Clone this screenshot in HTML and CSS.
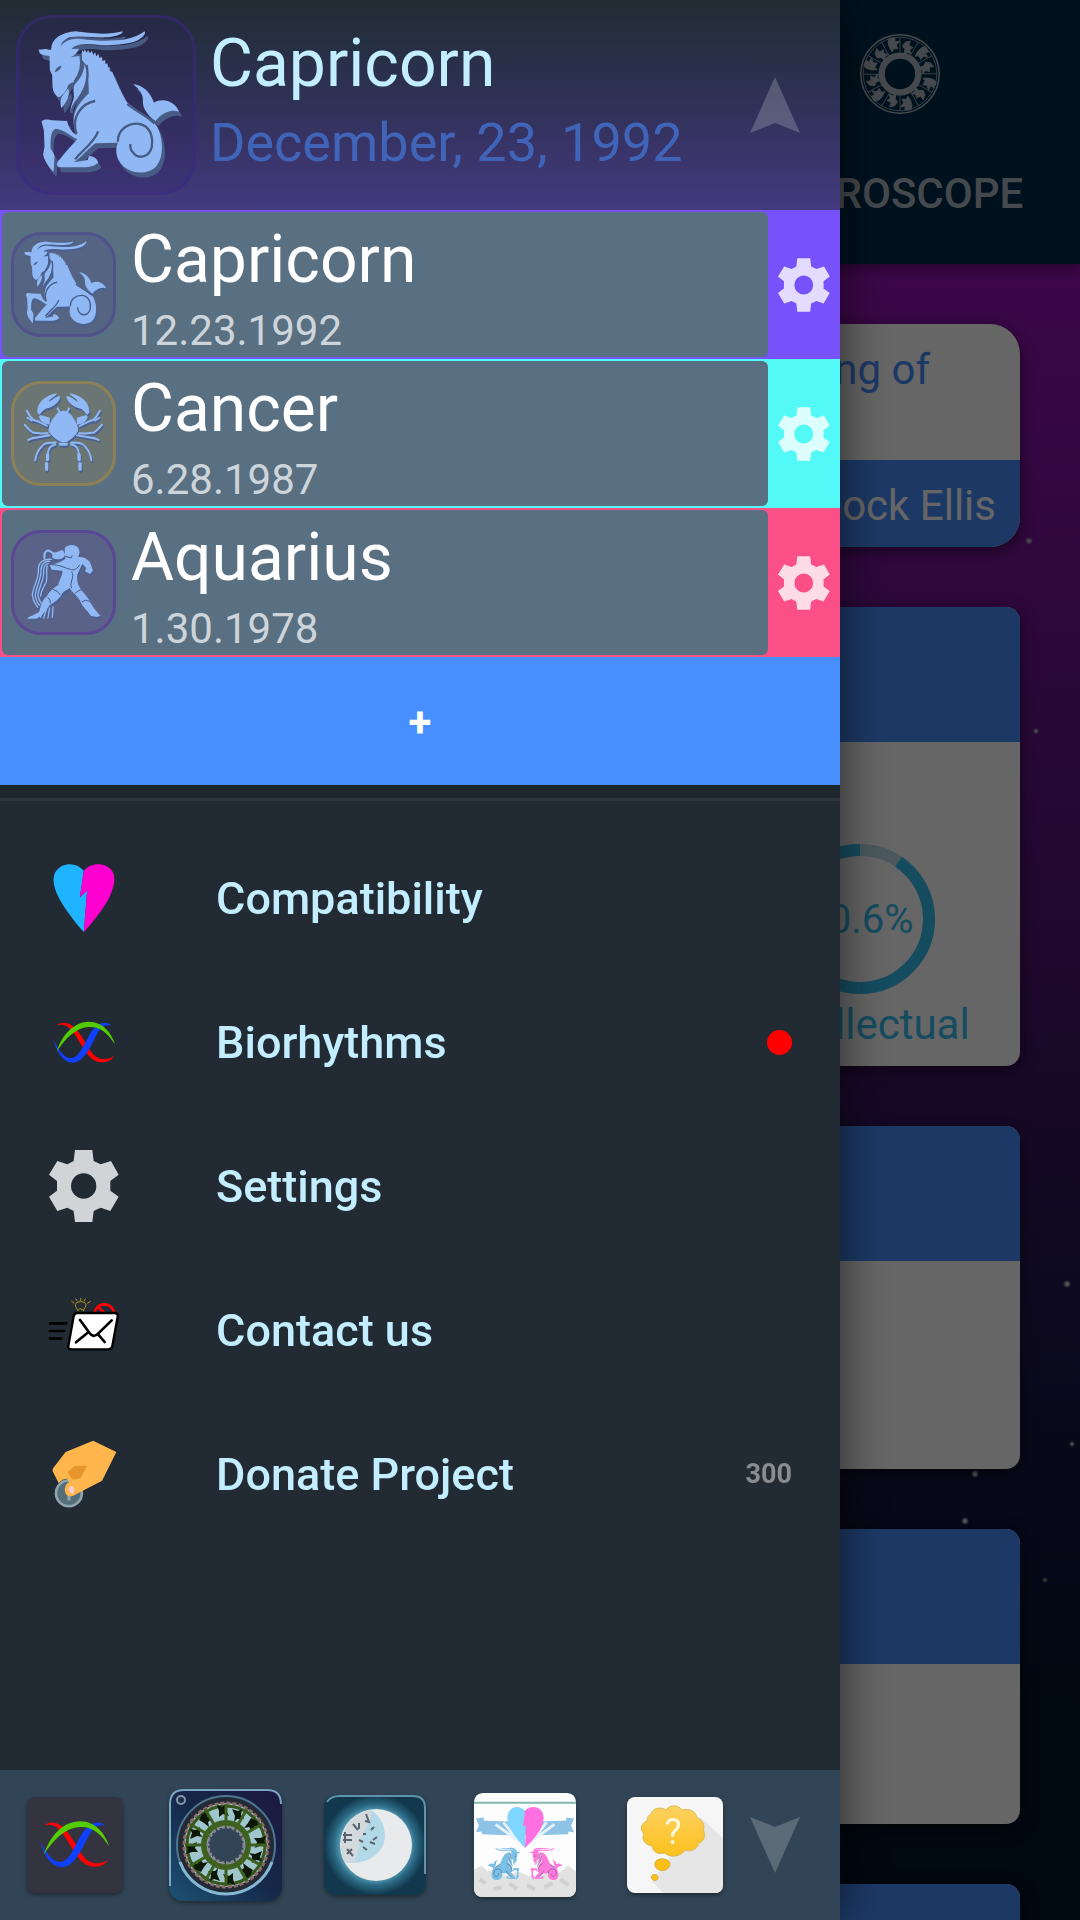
FILE: index.html
```html
<!DOCTYPE html>
<html lang="en">
<head>
    <meta charset="UTF-8">
    <meta name="viewport" content="width=device-width, initial-scale=1.0">
    <title>Horoscope</title>
    <link rel="stylesheet" href="styles.css">
</head>
<body>

    <!-- Shared icons -->
    <svg class="sprite" aria-hidden="true">
        <symbol id="gear" viewBox="0 0 210 216">
            <path fill-rule="evenodd" d="M78 0H130L134 33L155 43L186 33L209 74L184 93V122L209 140L184 183L155 173L134 183L130 216H78L74 183L55 173L25 183L0 140L24 122V93L0 74L25 33L55 43L74 33ZM104 70A38 38 0 1 0 104 146A38 38 0 1 0 104 70Z"/>
        </symbol>
        <symbol id="arrow" viewBox="0 0 50 56">
            <path d="M25 0L50 56L25 46L0 56Z"/>
        </symbol>
        <symbol id="goat" viewBox="49 45 535 540">
            <path d="M152 146C153 120 178 97 225 94C265 100 325 106 366 94C369 101 350 110 320 112C280 114 240 106 208 112C192 118 183 128 180 139C192 122 215 113 242 117C290 124 340 124 375 118C400 113 418 105 432 94C439 100 425 116 405 124C375 134 330 138 290 134C258 131 228 130 213 147L235 146C230 160 222 166 210 171L238 168C244 188 240 220 220 246C207 250 202 255 201 262C193 280 184 288 175 292C165 286 158 278 156 260L155 225L148 210L147 168C135 168 122 164 118 160L114 149L136 147L150 150Z"/>
            <path d="M203 265C209 282 203 300 183 325C178 311 180 298 184 290Z"/>
            <path d="M252 193C265 215 262 265 240 290C226 305 214 320 211 340C207 318 222 302 220 285C219 272 218 265 222 254C238 238 250 220 252 193Z"/>
            <path d="M245 150L250 156L253 148L258 158L263 150L268 160L274 152L278 164L284 157L287 169L294 162L297 175L304 170L306 183L314 180L315 192L321 190L322 202L328 202L327 213L335 215C350 250 365 285 382 310C420 340 462 358 474 388C490 430 488 475 466 500C445 522 400 525 370 500C348 480 342 455 352 428L285 430C258 450 240 475 220 487L262 480L265 468C280 468 292 478 293 488C280 500 262 502 240 502H175C165 495 170 485 178 478C195 455 215 435 230 418C210 408 190 388 165 386C152 392 150 410 150 445C155 455 160 458 162 468C160 490 162 505 158 515C145 500 130 482 128 462L132 440L130 390L123 365C128 356 145 358 155 361L200 363C202 375 210 395 228 405C206 350 228 315 265 280L262 200L242 178Z"/>
            <path d="M398 252C425 255 450 275 460 308C490 292 522 305 536 335C505 325 480 345 465 363C448 350 425 330 427 300C428 280 415 268 398 252Z"/>
            <g class="cut">
                <path d="M163 214Q170 198 183 197Q180 212 163 216Z"/>
                <path class="line" d="M228 402C210 350 245 310 284 303M293 394C280 430 245 450 224 478M258 195C268 240 252 272 234 296C220 312 212 328 214 340M240 166C246 195 238 225 222 245M352 425C352 390 380 370 412 371C450 376 458 410 454 440C446 474 412 478 398 458C390 450 388 442 390 432M380 312C400 330 430 342 462 370"/>
            </g>
        </symbol>
        <symbol id="crab" viewBox="35 528 313 314">
            <path d="M191 617C205 618 215 628 222 640C232 655 236 665 235 678C225 695 205 712 191 712C175 708 155 692 147 678C147 660 155 645 165 635C172 622 180 618 191 617Z"/>
            <g id="crab-half">
                <path d="M113 622C112 595 135 570 172 565C166 578 150 580 148 590C158 586 168 572 182 574C180 592 160 606 140 610C132 615 124 622 120 630Z"/>
                <path d="M122 630L151 638L150 658C135 659 122 650 118 636Z"/>
                <path class="limb" d="M82 617Q92 636 98 640M100 644L118 650M121 652L142 662"/>
                <path class="limb" d="M76 659Q90 676 96 679M99 682L118 684M121 685L144 684M84 638L96 646M86 704Q98 698 112 697M115 696L150 690"/>
                <path class="limb" d="M168 712Q140 712 132 718M128 722Q110 740 107 765M167 718Q150 722 147 735M146 738L142 765"/>
                <path class="limb wide" d="M141 775V792M144 748V762"/>
                <path class="limb" d="M174 610L181 624"/>
            </g>
            <use href="#crab-half" transform="matrix(-1 0 0 1 382 0)"/>
            <path d="M176 713H206L202 722H180Z"/>
        </symbol>
        <symbol id="waterman" viewBox="35 300 313 315">
            <path d="M195 356C200 344 222 341 234 352C242 362 240 374 235 380C255 380 270 390 274 404L280 422L271 432L256 424L260 414L248 402L238 422C230 436 232 450 236 465L246 482C258 495 270 508 272 518C280 530 292 548 303 557L292 561L274 558C264 542 248 530 244 518C238 500 214 486 211 474C200 480 192 484 188 490C182 506 162 518 150 526C140 542 124 560 110 566H82C92 556 112 552 119 545C124 525 128 510 140 500C150 484 160 474 176 465C178 450 190 436 188 422L156 419L150 406C165 402 185 396 197 386Z"/>
            <path d="M158 366C168 372 178 360 190 361L198 376C188 390 172 390 158 384Z"/>
            <path class="limb" d="M134 384C132 366 142 358 152 364L160 370"/>
            <path class="limb thin" d="M155 388C130 386 116 396 116 420C120 440 100 470 98 495C100 515 106 520 114 532M150 394C136 392 124 402 124 420C126 445 108 475 107 495C108 510 112 518 120 526M146 400C134 402 132 412 132 425C134 450 116 475 115 495C116 506 120 514 125 520M143 408C138 420 144 435 140 455C134 470 124 480 123 498M122 562L130 545M132 564L140 538M145 564L150 534M158 562L160 530"/>
            <g class="cut">
                <path class="line fine" d="M194 378L214 384L218 376M158 404C180 404 195 414 212 418C222 424 235 414 240 404M216 425C226 440 208 460 216 474M160 478Q175 482 182 495M144 502Q154 510 152 520M226 490Q240 478 246 480M246 516Q258 506 270 514"/>
            </g>
        </symbol>
        <symbol id="waves" viewBox="66 538 190 128">
            <path fill="#f00" d="M77 551C100 534 126 548 144 574C169 606 182 651 215 654C232 655 242 652 251 645C240 663 225 665 206 663C166 655 150 600 126 572C112 553 98 546 77 551Z"/>
            <path fill="#1040ff" d="M66 594C84 630 100 652 123 651C146 648 161 606 180 574C198 546 224 534 243 552C222 545 208 560 196 584C179 618 157 667 123 665C93 661 76 630 66 594Z"/>
            <path fill="#5c0" d="M76 632C93 578 130 540 175 540C217 540 244 575 254 609C232 577 212 555 175 556C137 557 102 590 76 632Z"/>
        </symbol>
        <symbol id="heart" viewBox="70 68 187 205">
            <path fill="#1fb4ff" d="M163 88C140 62 100 62 80 88C62 112 76 150 92 178C112 212 138 246 163 273L173 147L151 169Z"/>
            <path fill="#ff00d0" d="M163 88C185 62 228 62 248 88C264 112 250 150 235 178C215 212 188 246 163 273L173 147L151 169Z"/>
        </symbol>
        <symbol id="wheel" viewBox="0 0 100 100">
            <g fill="none" stroke="currentColor">
                <circle cx="50" cy="50" r="49" stroke-width="2"/>
                <circle cx="50" cy="50" r="46" stroke-width="1"/>
                <circle cx="50" cy="50" r="23" stroke-width="8"/>
            </g>
            <g fill="currentColor">
                <path id="w1" d="M50 4V27M57 10L63 9L61 14L66 17L62 20L64 25L59 23L55 26L56 19L53 15Z" stroke="currentColor" stroke-width="1"/>
                <use href="#w1" transform="rotate(60 50 50)"/>
                <use href="#w1" transform="rotate(120 50 50)"/>
                <use href="#w1" transform="rotate(180 50 50)"/>
                <use href="#w1" transform="rotate(240 50 50)"/>
                <use href="#w1" transform="rotate(300 50 50)"/>
                <path id="w2" d="M73 10L61 30M77 17L82 16L86 22L82 24L85 29L79 28L76 32L73 27L69 28L72 22Z" stroke="currentColor" stroke-width="1"/>
                <use href="#w2" transform="rotate(60 50 50)"/>
                <use href="#w2" transform="rotate(120 50 50)"/>
                <use href="#w2" transform="rotate(180 50 50)"/>
                <use href="#w2" transform="rotate(240 50 50)"/>
                <use href="#w2" transform="rotate(300 50 50)"/>
            </g>
        </symbol>
    </svg>

    <!-- Page behind the drawer -->
    <header class="topbar">
        <a class="tab" href="#horoscope">
            <svg class="tab-icon"><use href="#wheel"/></svg>
            HOROSCOPE
        </a>
    </header>

    <main class="feed">
        <article class="card quote">
            <p class="quote-text">nothing of</p>
            <p class="quote-author">Dock Ellis</p>
        </article>
        <article class="card">
            <div class="card-head"></div>
            <div class="gauges">
                <div class="gauge">
                    <div class="gauge-ring">
                        <svg viewBox="0 0 150 150">
                            <circle cx="75" cy="75" r="69" pathLength="100" class="ring-rest"/>
                            <circle cx="75" cy="75" r="69" pathLength="100" class="ring-value"/>
                        </svg>
                        <span>90.6%</span>
                    </div>
                    <p class="gauge-label">Intellectual</p>
                </div>
            </div>
        </article>
        <article class="card">
            <div class="card-head"></div>
            <div class="card-body tall"></div>
        </article>
        <article class="card">
            <div class="card-head"></div>
            <div class="card-body"></div>
        </article>
        <article class="card">
            <div class="card-head"></div>
            <div class="card-body"></div>
        </article>
    </main>

    <div class="scrim"></div>

    <!-- Drawer -->
    <aside class="drawer">
        <header class="profile">
            <svg class="profile-sign"><use href="#goat"/></svg>
            <div class="profile-text">
                <h1>Capricorn</h1>
                <p>December, 23, 1992</p>
            </div>
            <button class="arrow-btn" type="button" aria-label="Collapse profiles">
                <svg><use href="#arrow"/></svg>
            </button>
        </header>

        <ul class="people">
            <li class="person violet">
                <a class="person-card" href="#capricorn">
                    <svg class="sign sign-goat"><use href="#goat"/></svg>
                    <span class="person-text">
                        <span class="person-name">Capricorn</span>
                        <span class="person-date">12.23.1992</span>
                    </span>
                </a>
                <button class="edit-btn" type="button" aria-label="Edit Capricorn"><svg><use href="#gear"/></svg></button>
            </li>
            <li class="person cyan">
                <a class="person-card" href="#cancer">
                    <svg class="sign sign-crab"><use href="#crab"/></svg>
                    <span class="person-text">
                        <span class="person-name">Cancer</span>
                        <span class="person-date">6.28.1987</span>
                    </span>
                </a>
                <button class="edit-btn" type="button" aria-label="Edit Cancer"><svg><use href="#gear"/></svg></button>
            </li>
            <li class="person pink">
                <a class="person-card" href="#aquarius">
                    <svg class="sign sign-water"><use href="#waterman"/></svg>
                    <span class="person-text">
                        <span class="person-name">Aquarius</span>
                        <span class="person-date">1.30.1978</span>
                    </span>
                </a>
                <button class="edit-btn" type="button" aria-label="Edit Aquarius"><svg><use href="#gear"/></svg></button>
            </li>
        </ul>
        <button class="add-btn" type="button">+</button>

        <nav class="menu">
            <a href="#compatibility">
                <span class="menu-icon"><svg class="icon-heart"><use href="#heart"/></svg></span>
                <span class="menu-label">Compatibility</span>
            </a>
            <a href="#biorhythms">
                <span class="menu-icon"><svg class="icon-waves"><use href="#waves"/></svg></span>
                <span class="menu-label">Biorhythms</span>
                <span class="dot"></span>
            </a>
            <a href="#settings">
                <span class="menu-icon"><svg class="icon-gear"><use href="#gear"/></svg></span>
                <span class="menu-label">Settings</span>
            </a>
            <a href="#contact">
                <span class="menu-icon">
                    <svg class="icon-mail" viewBox="54 70 216 216">
                        <g fill="none" stroke="#b8961e" stroke-width="3">
                            <path d="M145 122C140 112 136 108 136 102C138 90 166 90 168 102C168 108 162 112 160 122M124 91L133 98M137 84L142 92M152 82V90M166 84L162 92M182 92L172 98M145 116Q152 112 160 118"/>
                        </g>
                        <g fill="none" stroke="#f00" stroke-width="8">
                            <circle cx="223" cy="130" r="29"/>
                            <path d="M204 108L236 140"/>
                        </g>
                        <path d="M142 127H254Q265 127 263 138L247 226Q245 236 235 236H125Q113 236 115 226L131 137Q133 127 142 127Z" fill="#fff" stroke="#000" stroke-width="7"/>
                        <path d="M150 148L178 186Q190 204 205 188L245 149M172 187L138 215M205 192L224 214M60 158H109M60 181H102M60 204H94" fill="none" stroke="#000" stroke-width="8" stroke-linecap="round"/>
                    </svg>
                </span>
                <span class="menu-label">Contact us</span>
            </a>
            <a href="#donate">
                <span class="menu-icon">
                    <svg class="icon-hand" viewBox="64 508 196 204">
                        <circle cx="115" cy="668" r="39" fill="#546e7a" stroke="#90a4ae" stroke-width="8"/>
                        <path d="M110 670H120V690H110Z" fill="#90a4ae"/>
                        <path d="M188 510L258 544L215 630L126 676C112 682 100 668 103 652Q105 640 116 634L110 624Q96 624 84 637L66 602V594L105 544Z" fill="#ffb74d"/>
                        <path d="M132 585H170L150 623Q135 628 124 626L111 605Z" fill="#e8962b"/>
                        <path d="M116 648Q126 642 130 653Q134 668 124 670Q112 664 116 648Z" fill="#ffcdd2"/>
                    </svg>
                </span>
                <span class="menu-label">Donate Project</span>
                <span class="price">300</span>
            </a>
        </nav>

        <footer class="apps">
            <a href="#app-biorhythms" aria-label="Biorhythms app">
                <svg class="app" viewBox="0 0 96 96">
                    <rect width="96" height="96" rx="8" fill="#33343f"/>
                    <use href="#waves" x="13" y="22" width="70" height="50"/>
                </svg>
            </a>
            <a href="#app-zodiac" aria-label="Zodiac app">
                <svg class="app app-large" viewBox="0 0 115 114">
                    <defs>
                        <linearGradient id="night" x1="0" y1="1" x2="1" y2="0">
                            <stop offset="0" stop-color="#1d5273"/>
                            <stop offset="0.5" stop-color="#15284a"/>
                            <stop offset="1" stop-color="#1d1740"/>
                        </linearGradient>
                    </defs>
                    <rect x="1" y="1" width="113" height="112" rx="14" fill="url(#night)"/>
                    <path d="M2 98V16Q2 2 16 2H99Q113 2 113 16" fill="none" stroke="#7ba6c6" stroke-width="2"/>
                    <circle cx="58" cy="57" r="49" fill="#232a36" stroke="#4f7690" stroke-width="2"/>
                    <path d="M12 74A49 49 0 0 0 104 74" fill="none" stroke="#86b8d4" stroke-width="3"/>
                    <circle cx="58" cy="57" r="42" fill="#9fc6cc" stroke="#8e6a68" stroke-width="3" stroke-dasharray="4 2"/>
                    <circle cx="58" cy="57" r="39" fill="none" stroke="#35551c" stroke-width="3"/>
                    <g id="cells" fill="#0c1708">
                        <path d="M64 21L70 23L74 21L73 27L76 31L69 31L66 34L67 28Z"/>
                        <path d="M83 30L89 33L92 39L87 38L84 43L81 39L76 40L80 35Z"/>
                        <path d="M92 50L98 48L96 53L99 58L93 57L87 60L89 54L86 50Z"/>
                    </g>
                    <use href="#cells" transform="rotate(90 58 57)"/>
                    <use href="#cells" transform="rotate(180 58 57)"/>
                    <use href="#cells" transform="rotate(270 58 57)"/>
                    <path d="M58 16V98M17 57H99M37 21L79 93M22 36L94 78M22 78L94 36M37 93L79 21" stroke="#3d5f1e" stroke-width="3"/>
                    <circle cx="58" cy="57" r="22" fill="none" stroke="#3f6120" stroke-width="6"/>
                    <circle cx="58" cy="57" r="18" fill="#324556" stroke="#8b8496" stroke-width="3" stroke-dasharray="3 2"/>
                    <circle cx="13" cy="12" r="4" fill="#1d2c4a" stroke="#8299b0" stroke-width="2"/>
                </svg>
            </a>
            <a href="#app-moon" aria-label="Moon app">
                <svg class="app app-medium" viewBox="0 0 104 102">
                    <defs>
                        <radialGradient id="glow">
                            <stop offset="0.6" stop-color="#77bdd5"/>
                            <stop offset="0.8" stop-color="#2c6c86"/>
                            <stop offset="1" stop-color="#12384e"/>
                        </radialGradient>
                    </defs>
                    <rect x="1" y="1" width="102" height="100" rx="12" fill="url(#glow)"/>
                    <path d="M4 8Q8 2 16 2H90Q102 2 102 14V80" fill="none" stroke="#5f93aa" stroke-width="2"/>
                    <circle cx="53" cy="51" r="36" fill="#e8eaec"/>
                    <path d="M48 16A36 36 0 0 0 22 68C40 72 60 62 62 43C62 30 56 21 48 16Z" fill="#b3d9e8"/>
                    <path d="M48 16A36 36 0 0 0 22 68L32 68L38 44L48 24Z" fill="#d4d9dd"/>
                    <g fill="none" stroke="#5b6570" stroke-width="2">
                        <path d="M20 41H29M20 46H29M22 38V49M24 60L29 55M24 55L30 62M30 30L35 36M36 29V35M43 20L46 28L42 27M40 40H43M36 46L40 48M40 53L44 56M48 36L51 33M50 46L54 43M47 48L52 50"/>
                    </g>
                </svg>
            </a>
            <a href="#app-love" aria-label="Love app">
                <svg class="app app-medium" viewBox="0 0 104 106">
                    <rect width="104" height="106" rx="9" fill="#fdfdfd"/>
                    <path d="M0 10H104" stroke="#7fb9ae" stroke-width="2"/>
                    <path d="M2 26L10 25V39L2 40L5 33ZM102 26L94 25V39L102 40L99 33Z" fill="#8fc3e6"/>
                    <path d="M8 28Q52 30 96 28V42Q52 44 8 42Z" fill="#8fc3e6"/>
                    <path d="M22 32L44 48M82 32L60 48M30 30L46 50M74 30L58 50" stroke="#e6f2fa" stroke-width="3"/>
                    <path d="M52 18C45 11 34 14 34 26C35 38 45 48 52 56Z" fill="#7fd6ff"/>
                    <path d="M52 18C59 11 71 14 71 26C70 38 60 48 52 56L53 33L50 34Z" fill="#ff6fe0"/>
                    <path d="M0 78L8 74L14 80L22 78L32 84L45 80L60 86L74 80L86 82L96 74L104 80V97Q104 106 95 106H9Q0 106 0 97Z" fill="#e2e2e2"/>
                    <path d="M6 88L12 92M20 98L28 96M36 92L44 98M54 94L62 98M72 96L80 92M88 88L96 94" stroke="#cfcfcf" stroke-width="4"/>
                    <use href="#goat" transform="matrix(-1 0 0 1 62 0)" x="10" y="52" width="42" height="42" fill="#79bfe6"/>
                    <use href="#goat" x="52" y="52" width="42" height="42" fill="#ff78dc"/>
                </svg>
            </a>
            <a href="#app-question" aria-label="Questions app">
                <svg class="app" viewBox="0 0 96 96">
                    <defs>
                        <linearGradient id="amber" x1="0" y1="0" x2="0" y2="1">
                            <stop offset="0" stop-color="#fdd160"/>
                            <stop offset="1" stop-color="#fcc11c"/>
                        </linearGradient>
                    </defs>
                    <rect width="96" height="96" rx="8" fill="#f6f6f6"/>
                    <path d="M73 20L96 41V88Q96 96 88 96H36L25 84Z" fill="#e6e6e6"/>
                    <path d="M24 17C26 10 35 10 39 13C43 7 52 8 55 13C62 11 69 14 70 21C77 23 78 30 76 33C80 39 76 45 72 46C70 53 63 55 58 53C54 60 42 61 38 56C31 58 26 55 25 49C18 48 14 42 17 37C12 32 15 25 20 24C20 20 22 18 24 17Z" fill="url(#amber)" stroke="#d9bd55"/>
                    <path d="M28 66C29 61 40 60 43 66C43 72 37 75 33 73C30 73 27 69 28 66ZM24 80C26 76 31 77 31 81C30 85 25 84 24 80Z" fill="#fcbf17" stroke="#d9ad35"/>
                    <text x="46" y="47" text-anchor="middle">?</text>
                </svg>
            </a>
            <button class="arrow-btn down" type="button" aria-label="Hide apps">
                <svg><use href="#arrow"/></svg>
            </button>
        </footer>
    </aside>

</body>
</html>
```
FILE: styles.css
```css
* {
    box-sizing: border-box;
    margin: 0;
    padding: 0;
}

body {
    font-family: Roboto, "Liberation Sans", sans-serif;
    font-size: 42px;
    height: 100vh;
    overflow: hidden;
    background:
        radial-gradient(circle at 1029px 541px, #bbb 1px, transparent 4px),
        radial-gradient(circle at 1036px 731px, #bbb 1px, transparent 3px),
        radial-gradient(circle at 1067px 1284px, #ddd 1px, transparent 4px),
        radial-gradient(circle at 1072px 1444px, #bbb 1px, transparent 3px),
        radial-gradient(circle at 975px 1474px, #ddd 1px, transparent 4px),
        radial-gradient(circle at 965px 1521px, #ddd 1px, transparent 4px),
        radial-gradient(circle at 1045px 1580px, #888 1px, transparent 3px),
        linear-gradient(#a812c8 0%, #9811b6 14%, #731496 31%, #411466 55%, #231950 66%, #14143e 78%, #00142a 90%, #00142a 100%);
}

a {
    color: inherit;
    text-decoration: none;
}

button {
    border: none;
    background: none;
    font-family: inherit;
    cursor: pointer;
}

.sprite {
    position: absolute;
    width: 0;
    height: 0;
}

/* Page behind the drawer */
.topbar {
    display: flex;
    justify-content: flex-end;
    height: 264px;
    background: #002b4b;
    box-shadow: 0 4px 12px rgba(0, 0, 0, 0.4);
}

.tab {
    display: flex;
    flex-direction: column;
    align-items: center;
    gap: 55px;
    width: 33.33%;
    padding-top: 34px;
    color: #adb7c1;
    font-weight: 500;
}

.tab-icon {
    width: 80px;
    height: 80px;
}

.feed {
    display: flex;
    flex-direction: column;
    gap: 60px;
    padding: 60px;
}

.card {
    flex-shrink: 0;
    background: #fff;
    border-radius: 14px;
    overflow: hidden;
    box-shadow: 0 4px 16px rgba(0, 0, 0, 0.5);
}

.card-head {
    height: 135px;
    background: #478eff;
}

.card-body {
    height: 160px;
}

.card-body.tall {
    height: 208px;
}

.quote {
    border-radius: 30px;
    text-align: right;
}

.quote-text {
    min-height: 136px;
    padding: 21px 90px 0 24px;
    color: #478eff;
}

.quote-author {
    padding: 21px 24px 17px;
    background: #478eff;
    color: #fff;
}

.gauges {
    display: grid;
    grid-template-columns: repeat(3, 1fr);
    padding: 102px 0 17px;
    color: #35bef0;
}

.gauge {
    grid-column: 3;
    text-align: center;
}

.gauge-ring {
    display: grid;
    place-items: center;
    margin-bottom: 6px;
    font-size: 40px;
}

.gauge-ring > * {
    grid-area: 1 / 1;
}

.gauge-ring svg {
    width: 150px;
    height: 150px;
    transform: rotate(-90deg);
}

.gauge-label {
    padding-left: 14px;
    line-height: 49px;
}

.ring-rest,
.ring-value {
    fill: none;
    stroke: #bcdfeb;
    stroke-width: 12;
}

.ring-value {
    stroke: #35bef0;
    stroke-dasharray: 90.6 9.4;
    stroke-dashoffset: -9.4;
}

.scrim {
    position: fixed;
    inset: 0;
    background: rgba(0, 0, 0, 0.6);
}

/* Drawer */
.drawer {
    position: fixed;
    top: 0;
    bottom: 0;
    left: 0;
    right: 240px;
    display: flex;
    flex-direction: column;
    background: #222b34;
    box-shadow: 0 0 48px rgba(0, 0, 0, 0.6);
}

.profile {
    display: flex;
    align-items: center;
    gap: 14px;
    height: 210px;
    padding: 0 40px 0 16px;
    background: linear-gradient(#222c34, #262f42 20%, #303258 50%, #393468 72%, #433a80);
}

.profile-sign {
    width: 180px;
    height: 180px;
    border-radius: 36px;
    background: rgba(50, 30, 110, 0.2);
    box-shadow: inset 0 0 0 3px rgba(60, 40, 135, 0.5);
    fill: #8fb8f4;
}

.profile-sign use {
    filter: drop-shadow(3px 5px 0 #485b84);
}

.cut {
    fill: #465a84;
}

.line {
    fill: none;
    stroke: #465a84;
    stroke-width: 7;
}

.line.fine {
    stroke-width: 3;
}

.limb {
    fill: none;
    stroke: #8fb8f4;
    stroke-width: 6;
    stroke-linecap: round;
}

.limb.wide {
    stroke-width: 10;
}

.limb.thin {
    stroke-width: 4;
}

.profile-text {
    flex: 1;
}

.profile h1 {
    color: #c2eeff;
    font-size: 66px;
    font-weight: 400;
    line-height: 78px;
}

.profile p {
    padding-bottom: 3px;
    color: #4064b8;
    font-size: 54px;
    line-height: 80px;
}

.arrow-btn {
    width: 50px;
    height: 56px;
}

.arrow-btn svg {
    display: block;
    width: 50px;
    height: 56px;
    fill: rgba(255, 255, 255, 0.2);
}

.arrow-btn.down svg {
    transform: rotate(180deg);
}

.people {
    list-style: none;
}

.person {
    display: flex;
    padding: 2px 0 2px 2px;
}

.violet {
    background: #7752fa;
}

.cyan {
    background: #52f9f6;
}

.pink {
    background: #fa5087;
}

.person-card {
    flex: 1;
    display: flex;
    align-items: center;
    gap: 15px;
    height: 145px;
    padding-left: 9px;
    border-radius: 6px;
    background: #596f82;
}

.sign {
    width: 105px;
    height: 105px;
    border-radius: 30px;
    fill: #8fb8f4;
}

.sign use {
    filter: drop-shadow(1px 2px 0 #4a6090);
}

.sign-goat {
    background: #546482;
    box-shadow: inset 0 0 0 3px #50528a;
}

.sign-crab {
    background: #6b7574;
    box-shadow: inset 0 0 0 3px #8c8057;
}

.sign-water {
    background: #5a6288;
    box-shadow: inset 0 0 0 3px #5b4793;
}

.person-text {
    display: flex;
    flex-direction: column;
    gap: 8px;
    padding-top: 6px;
}

.person-name {
    color: #fff;
    font-size: 66px;
    line-height: 77px;
}

.person-date {
    color: #cdd4da;
    font-size: 42px;
    line-height: 49px;
}

.edit-btn {
    width: 72px;
}

.edit-btn svg {
    display: block;
    width: 52px;
    height: 54px;
    margin: 0 auto;
    fill: rgba(255, 255, 255, 0.8);
}

.add-btn {
    height: 128px;
    padding-top: 3px;
    background: #478eff;
    color: #fff;
    font-size: 42px;
    font-weight: 700;
}

.menu {
    flex: 1;
    padding-top: 25px;
    border-top: 3px solid #2e353e;
    margin-top: 13px;
    box-shadow: 0 -13px 0 #1e262e;
}

.menu a {
    display: flex;
    align-items: center;
    height: 144px;
    padding: 0 48px;
    color: #c2eeff;
}

.menu-icon {
    display: flex;
    justify-content: center;
    width: 72px;
}

.menu-label {
    flex: 1;
    padding-left: 96px;
    font-size: 45px;
    font-weight: 500;
}

.icon-heart {
    width: 62px;
    height: 68px;
}

.icon-waves {
    width: 63px;
    height: 42px;
}

.icon-gear {
    width: 70px;
    height: 72px;
    fill: #d1d4d7;
}

.icon-mail {
    width: 72px;
    height: 72px;
}

.icon-hand {
    width: 65px;
    height: 68px;
}

.dot {
    width: 25px;
    height: 25px;
    border-radius: 50%;
    background: #f00;
}

.price {
    color: #888b8f;
    font-size: 27px;
    font-weight: 700;
}

.apps {
    display: flex;
    align-items: center;
    height: 150px;
    padding-right: 40px;
    background: #324556;
}

.apps a {
    flex: 1;
    display: flex;
    justify-content: center;
}

.app {
    width: 96px;
    height: 96px;
    filter: drop-shadow(0 2px 2px rgba(0, 0, 0, 0.4));
}

.app-medium {
    width: 104px;
    height: 104px;
}

.app-large {
    width: 115px;
    height: 114px;
}

.app text {
    fill: #fff8dc;
    font-size: 36px;
}
```
